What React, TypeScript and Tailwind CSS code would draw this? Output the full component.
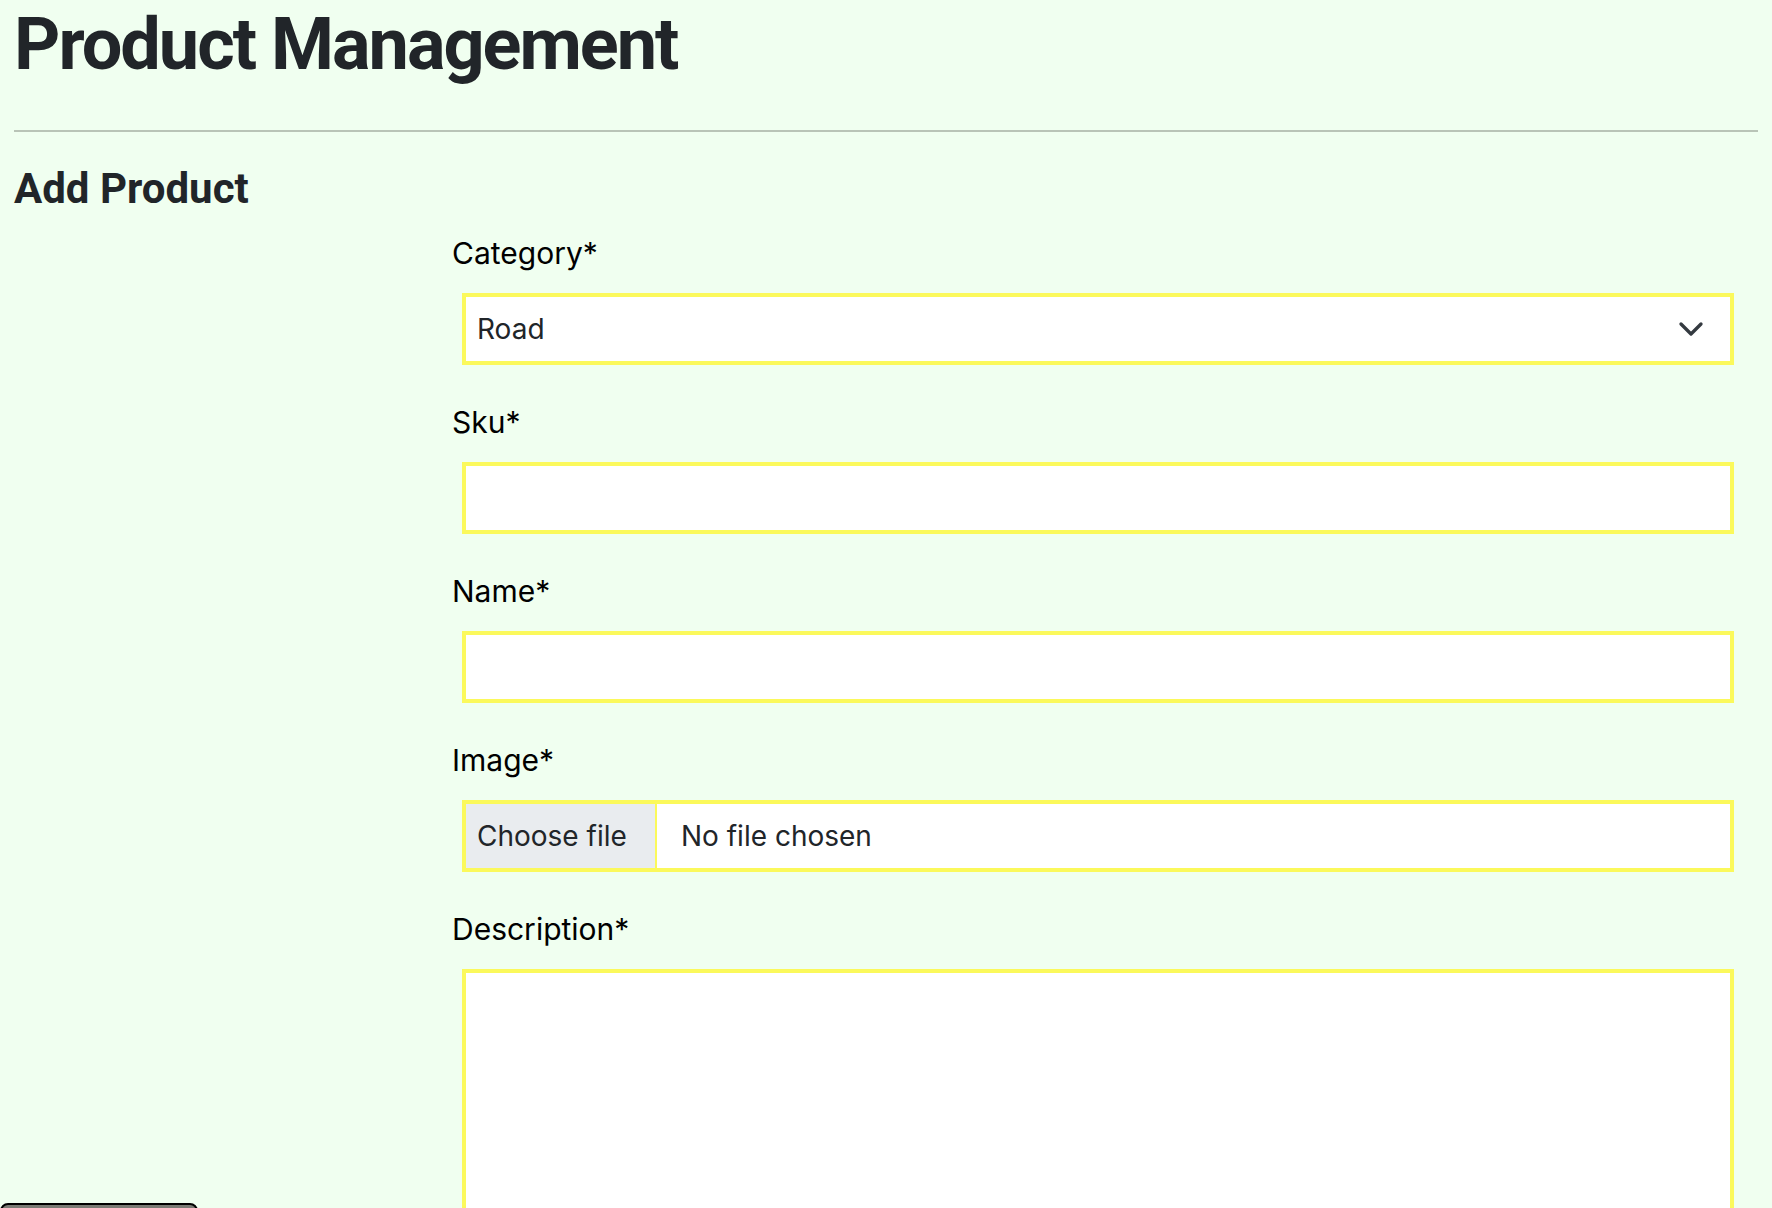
import { ChevronDown } from 'lucide-react';

const fieldBox =
  'w-full h-[72px] border-4 border-[#fbf95b] bg-white text-[28px] text-[#212529] outline-none';

function Label({ text }: { text: string }) {
  return (
    <label className="block text-[30px] leading-[36px] text-black">{text}</label>
  );
}

export default function App() {
  return (
    <div className="min-h-[1208px] bg-[#f0fff0] px-[14px] font-['Inter',sans-serif] text-[#212529] relative overflow-hidden">
      <h1 className="pt-[2px] text-[72px] leading-[86px] font-bold tracking-[-2px] font-['Roboto',sans-serif]">
        Product Management
      </h1>
      <hr className="mt-[42px] border-t-2 border-[#b9c4b7]" />
      <h2 className="mt-[32px] text-[42px] leading-[50px] font-bold font-['Roboto',sans-serif]">
        Add Product
      </h2>

      {/* form */}
      <form className="ml-[438px] mr-[24px] mt-[21px] flex flex-col">
        <Label text="Category*" />
        <div className="mt-[22px] ml-[10px] relative">
          <div className={`${fieldBox} flex items-center pl-[11px]`}>Road</div>
          <ChevronDown
            className="absolute right-[23px] top-[16px] w-[40px] h-[40px] text-[#343a40]"
            strokeWidth={2}
          />
        </div>

        <div className="mt-[39px]">
          <Label text="Sku*" />
        </div>
        <div className="mt-[22px] ml-[10px]">
          <input className={`${fieldBox} px-[11px]`} />
        </div>

        <div className="mt-[39px]">
          <Label text="Name*" />
        </div>
        <div className="mt-[22px] ml-[10px]">
          <input className={`${fieldBox} px-[11px]`} />
        </div>

        <div className="mt-[39px]">
          <Label text="Image*" />
        </div>
        <div className="mt-[22px] ml-[10px]">
          <div className={`${fieldBox} flex items-stretch`}>
            <div className="w-[191px] bg-[#e9ecef] border-r-2 border-[#fbf95b] flex items-center pl-[11px]">
              Choose file
            </div>
            <div className="flex items-center pl-[24px]">No file chosen</div>
          </div>
        </div>

        <div className="mt-[39px]">
          <Label text="Description*" />
        </div>
        <div className="mt-[22px] ml-[10px]">
          <textarea className="w-full h-[320px] border-4 border-[#fbf95b] bg-white outline-none resize-none block" />
        </div>
      </form>

      <div className="absolute left-0 top-[1203px] w-[198px] h-[44px] rounded-lg border-2 border-black bg-[#7a7b74]" />
    </div>
  );
}
